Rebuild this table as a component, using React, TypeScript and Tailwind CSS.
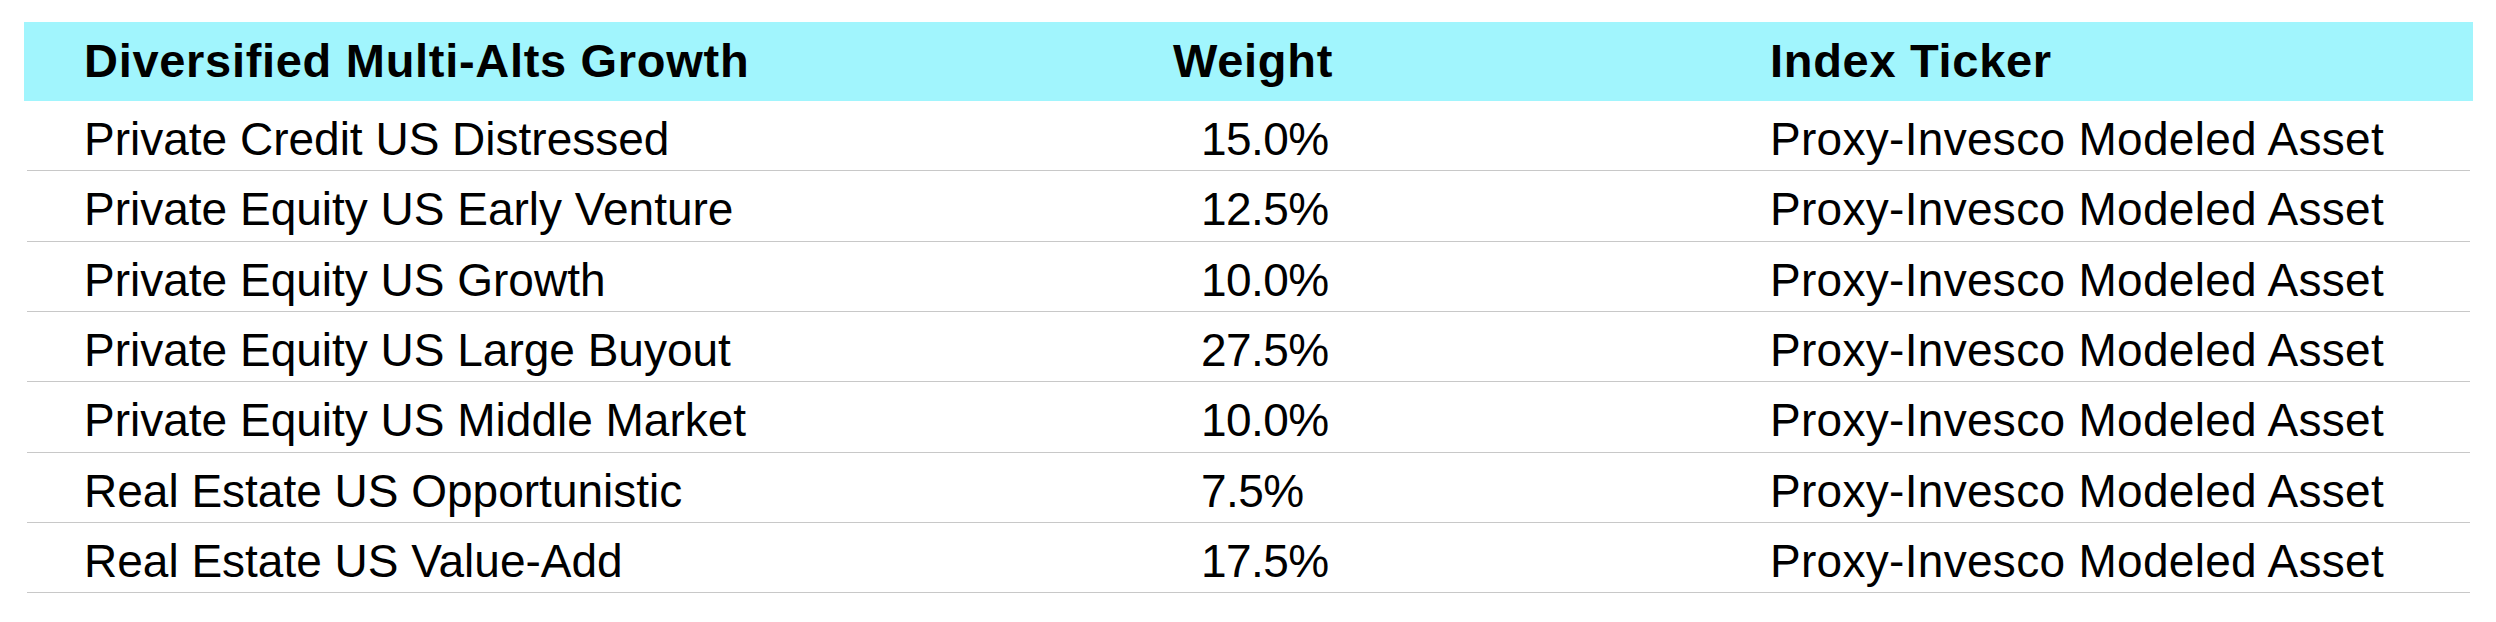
const rows = [
  { name: 'Private Credit US Distressed', weight: '15.0%' },
  { name: 'Private Equity US Early Venture', weight: '12.5%' },
  { name: 'Private Equity US Growth', weight: '10.0%' },
  { name: 'Private Equity US Large Buyout', weight: '27.5%' },
  { name: 'Private Equity US Middle Market', weight: '10.0%' },
  { name: 'Real Estate US Opportunistic', weight: '7.5%' },
  { name: 'Real Estate US Value-Add', weight: '17.5%' },
];

const App = () => {
  return (
    <div className="w-[2496px] h-[622px] bg-white pt-[22px] pl-[24px] text-black font-['Liberation_Sans',Arial,sans-serif]">
      <div className="w-[2449px]">
        {/* Header */}
        <div className="grid grid-cols-[1149px_597px_1fr] items-center h-[79px] bg-[#a1f5fd] text-[47px] font-bold tracking-[0.7px]">
          <div className="pl-[60px]">Diversified Multi-Alts Growth</div>
          <div>Weight</div>
          <div>Index Ticker</div>
        </div>

        {/* Allocation rows */}
        {rows.map((row) => (
          <div
            key={row.name}
            className="grid grid-cols-[1149px_597px_1fr] items-center h-[70.33px] pt-[4px] mx-[3px] border-b border-[#c8c8c8] text-[46px]"
          >
            <div className="pl-[57px]">{row.name}</div>
            <div className="pl-[25px] tracking-[-0.6px]">{row.weight}</div>
            <div className="-ml-[3px] tracking-[0.3px]">Proxy-Invesco Modeled Asset</div>
          </div>
        ))}
      </div>
    </div>
  );
};

export default App;
